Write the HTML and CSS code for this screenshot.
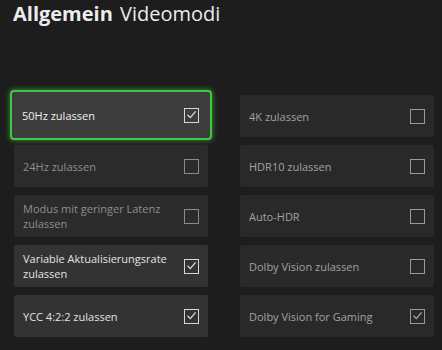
FILE: index.html
```html
<!DOCTYPE html>
<html lang="de">
<head>
<meta charset="utf-8">
<title>Videomodi</title>
<link rel="stylesheet" href="styles.css">
</head>
<body>
<div class="page">
  <h1 class="title"><span class="title-bold">Allgemein</span> <span class="title-light">Videomodi</span></h1>
  <div class="grid">
    <div class="tile focused"><span class="label">50Hz zulassen</span><span class="box"><svg viewBox="0 0 15 15"><polyline points="3.5,7.8 6.3,10.6 11.6,4.4"/></svg></span></div>
    <div class="tile right"><span class="label">4K zulassen</span><span class="box"></span></div>

    <div class="tile dim"><span class="label">24Hz zulassen</span><span class="box"></span></div>
    <div class="tile right"><span class="label">HDR10 zulassen</span><span class="box"></span></div>

    <div class="tile dim"><span class="label">Modus mit geringer Latenz zulassen</span><span class="box"></span></div>
    <div class="tile right"><span class="label">Auto-HDR</span><span class="box"></span></div>

    <div class="tile on"><span class="label">Variable Aktualisierungsrate zulassen</span><span class="box"><svg viewBox="0 0 15 15"><polyline points="3.5,7.8 6.3,10.6 11.6,4.4"/></svg></span></div>
    <div class="tile right"><span class="label">Dolby Vision zulassen</span><span class="box"></span></div>

    <div class="tile on"><span class="label">YCC 4:2:2 zulassen</span><span class="box"><svg viewBox="0 0 15 15"><polyline points="3.5,7.8 6.3,10.6 11.6,4.4"/></svg></span></div>
    <div class="tile right"><span class="label">Dolby Vision for Gaming</span><span class="box"><svg viewBox="0 0 15 15"><polyline points="3.5,7.8 6.3,10.6 11.6,4.4"/></svg></span></div>
  </div>
</div>
</body>
</html>
```
FILE: styles.css
```css
html, body {
  margin: 0;
  padding: 0;
}
body {
  background: #1d1d1d;
  font-family: "Open Sans", "Noto Sans", sans-serif;
  width: 442px;
  height: 350px;
  overflow: hidden;
}
.page {
  padding: 0 0 0 14px;
}
.title {
  margin: 0;
  padding: 1px 0 0 -1px;
  margin-left: -1px;
  font-size: 20px;
  line-height: 28px;
  color: #ececec;
  font-weight: 400;
  height: 95px;
  box-sizing: border-box;
}
.title-bold {
  font-weight: 700;
}
.title-light {
  font-weight: 400;
  margin-left: 2px;
}
.grid {
  display: grid;
  grid-template-columns: 194px 194px;
  grid-auto-rows: 42px;
  column-gap: 32px;
  row-gap: 8px;
}
.tile {
  display: flex;
  align-items: center;
  justify-content: space-between;
  padding: 0 9px 0 9px;
  border-radius: 2px;
  background: #2b2b2b;
  color: #8e8e8e;
  font-size: 11px;
  line-height: 15px;
}
.tile.right {
  background: #292929;
  color: #a2a2a2;
}
.tile.on {
  background: #333334;
  color: #e2e2e2;
}
.tile.focused {
  margin: -5px -4px -3px -4px;
  padding: 0 11px 0 10px;
  background: #3d3d3d;
  color: #f0f0f0;
  border: 2px solid #43c743;
  border-radius: 4px;
  box-shadow: 0 0 5px 1px rgba(60, 200, 60, 0.55);
}
.label {
  max-width: 150px;
}
.box {
  flex: 0 0 auto;
  width: 15px;
  height: 15px;
  box-sizing: border-box;
  border: 1.5px solid #8a8a8a;
  position: relative;
}
.tile.right .box {
  border-color: #9a9a9a;
}
.tile.on .box,
.tile.focused .box {
  border-color: #d6d6d6;
}
.box svg {
  position: absolute;
  left: -1.5px;
  top: -1.5px;
  width: 15px;
  height: 15px;
}
.box polyline {
  fill: none;
  stroke: #dcdcdc;
  stroke-width: 1.3;
}
.tile.right .box polyline {
  stroke: #a8a8a8;
}
```
